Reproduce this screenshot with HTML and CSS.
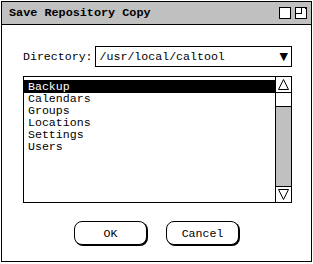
FILE: index.html
```html
<!DOCTYPE html>
<html lang="en">
<head>
    <meta charset="UTF-8">
    <title>Save Repository Copy</title>
    <link rel="stylesheet" href="styles.css">
</head>
<body>
    <div class="window">
        <div class="title-bar">
            <span class="title">Save Repository Copy</span>
            <span class="win-buttons">
                <span class="win-btn"></span>
                <span class="win-btn win-btn-restore"></span>
            </span>
        </div>

        <div class="content">
            <div class="dir-row">
                <label class="dir-label">Directory:</label>
                <div class="dropdown">
                    <span class="dropdown-text">/usr/local/caltool</span>
                    <span class="dropdown-arrow">&#9660;</span>
                </div>
            </div>

            <div class="list-box">
                <ul class="list">
                    <li class="list-item selected">Backup</li>
                    <li class="list-item">Calendars</li>
                    <li class="list-item">Groups</li>
                    <li class="list-item">Locations</li>
                    <li class="list-item">Settings</li>
                    <li class="list-item">Users</li>
                </ul>
                <div class="scrollbar">
                    <div class="scroll-arrow">
                        <svg width="15" height="15" viewBox="0 0 15 15"><path d="M2.5 12.5 L7.5 2.5 L12.5 12.5 Z" fill="none" stroke="#000" stroke-width="1"/></svg>
                    </div>
                    <div class="scroll-thumb"></div>
                    <div class="scroll-track"></div>
                    <div class="scroll-arrow scroll-arrow-down">
                        <svg width="15" height="15" viewBox="0 0 15 15"><path d="M2.5 2.5 L7.5 12.5 L12.5 2.5 Z" fill="none" stroke="#000" stroke-width="1"/></svg>
                    </div>
                </div>
            </div>

            <div class="button-row">
                <button class="btn">OK</button>
                <button class="btn">Cancel</button>
            </div>
        </div>
    </div>
</body>
</html>
```

FILE: styles.css
```css
body {
    margin: 0;
    padding: 1px;
    background-color: white;
    font-family: "Liberation Mono", "DejaVu Sans Mono", monospace;
    font-size: 11.6px;
    color: black;
}
.window {
    width: 309px;
    height: 259px;
    border: 1px solid black;
    background-color: white;
    display: flex;
    flex-direction: column;
}
.title-bar {
    height: 22px;
    background-color: #c0c0c0;
    border-bottom: 1px solid black;
    display: flex;
    align-items: center;
    justify-content: space-between;
    padding: 0 4px 0 7px;
}
.title {
    font-weight: bold;
    font-size: 11.8px;
}
.win-buttons {
    display: flex;
    gap: 4px;
}
.win-btn {
    width: 10px;
    height: 10px;
    border: 1px solid black;
    background-color: white;
    position: relative;
}
.win-btn-restore::after {
    content: "";
    position: absolute;
    left: 0;
    top: 0;
    width: 5px;
    height: 5px;
    border-right: 1px solid black;
    border-bottom: 1px solid black;
    left: 0;
    top: 0;
}
.win-btn-restore::after {
    left: auto;
    right: 0;
    top: 0;
    width: 0;
    height: 0;
}
.win-btn-restore {
    background:
        linear-gradient(black, black) 5px 0 / 1px 6px no-repeat,
        linear-gradient(black, black) 0 5px / 6px 1px no-repeat,
        white;
}
.content {
    flex-grow: 1;
    padding: 21px 19px 0 21px;
    display: flex;
    flex-direction: column;
}
.dir-row {
    display: flex;
    align-items: center;
}
.dir-label {
    margin-right: 2px;
}
.dropdown {
    flex-grow: 1;
    height: 19px;
    border: 1px solid black;
    display: flex;
    align-items: center;
    justify-content: space-between;
    padding: 0 3px 0 4px;
}
.dropdown-arrow {
    font-size: 11px;
    font-family: "DejaVu Sans", sans-serif;
}
.list-box {
    margin-top: 9px;
    height: 125px;
    border: 1px solid black;
    display: flex;
}
.list {
    flex-grow: 1;
    list-style: none;
    margin: 0;
    padding: 3px 0 0 0;
}
.list-item {
    height: 12px;
    line-height: 12px;
    padding-left: 4px;
}
.list-item.selected {
    background-color: black;
    color: white;
    height: 13px;
    line-height: 14px;
}
.scrollbar {
    width: 15px;
    border-left: 1px solid black;
    display: flex;
    flex-direction: column;
}
.scroll-arrow {
    height: 15px;
    border-bottom: 1px solid black;
}
.scroll-arrow svg {
    display: block;
}
.scroll-arrow-down {
    border-bottom: none;
    border-top: 1px solid black;
}
.scroll-thumb {
    height: 13px;
    border-bottom: 1px solid black;
    background-color: white;
}
.scroll-track {
    flex-grow: 1;
    background-color: #c0c0c0;
}
.button-row {
    display: flex;
    justify-content: center;
    gap: 19px;
    margin-top: 18px;
    padding-right: 2px;
}
.btn {
    width: 73px;
    height: 24px;
    border: 1px solid black;
    border-radius: 8px;
    box-shadow: 1px 1px 0 black;
    background-color: white;
    font-family: "Liberation Mono", monospace;
    font-size: 11.6px;
    padding: 0;
}
```
